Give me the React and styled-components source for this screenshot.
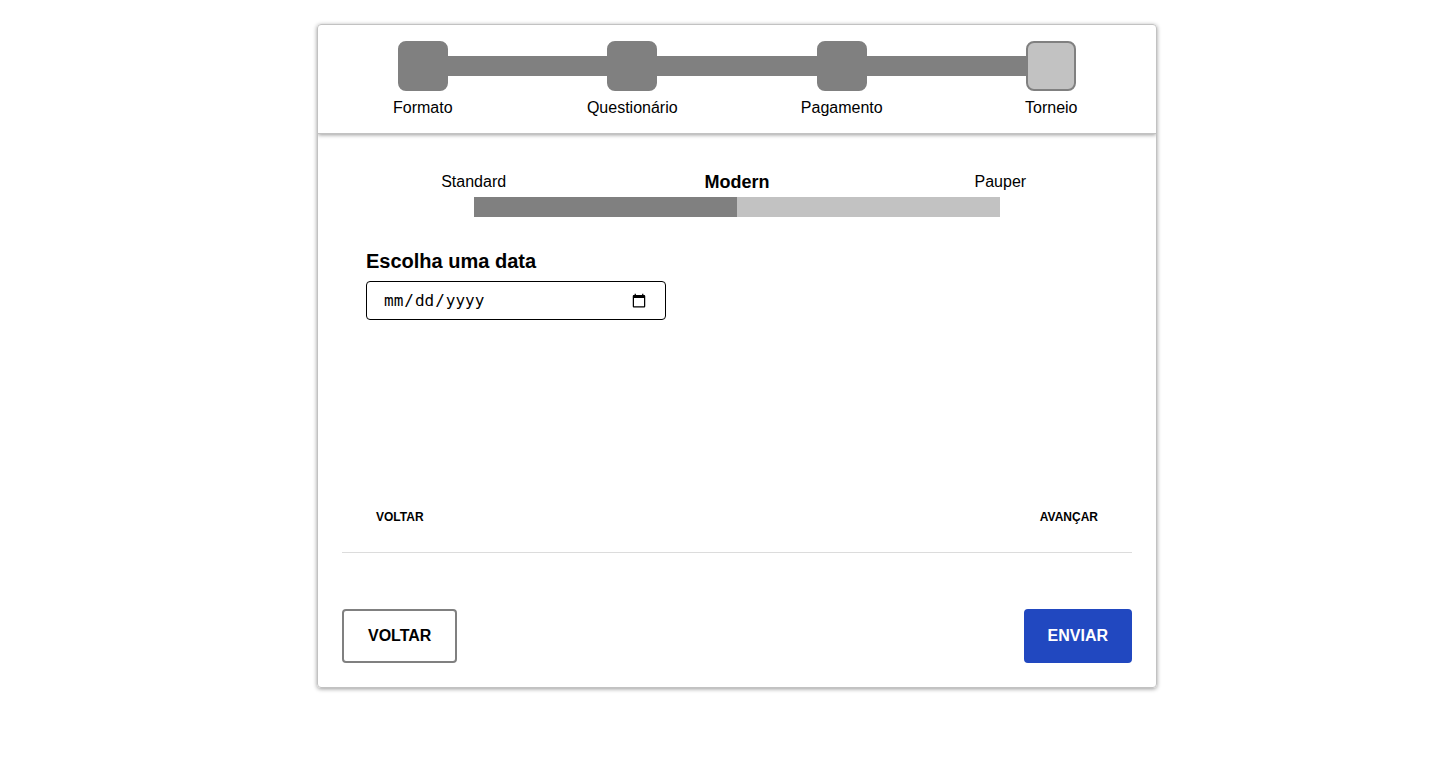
import React from "react";
import styled, { createGlobalStyle } from "styled-components";

const GlobalStyle = createGlobalStyle`
  * { box-sizing: border-box; margin: 0; }
  body {
    background: #fff;
    color: #000;
    font: 16px/18px "Liberation Sans", Arial, sans-serif;
  }
`;

const Page = styled.main`
  display: flex;
  justify-content: center;
  padding: 24px 0 24px 34px;
`;

const Card = styled.section`
  display: flex;
  flex-direction: column;
  width: 840px;
  height: 664px;
  border: 1px solid #c2c2c2;
  border-radius: 4px;
  box-shadow: 0 1px 4px rgba(0, 0, 0, 0.4);
`;

const Steps = styled.header`
  display: grid;
  grid-template-columns: repeat(4, 1fr);
  height: 109px;
  padding-top: 16px;
  border-bottom: 1px solid #c2c2c2;
  box-shadow: 0 1px 4px rgba(0, 0, 0, 0.4);
  clip-path: inset(0 0 -8px 0);
`;

const Step = styled.div`
  display: flex;
  flex-direction: column;
  gap: 8px;
  text-align: center;
`;

const Marker = styled.div`
  display: flex;
  align-items: center;
`;

const Line = styled.span`
  flex: 1;
  height: 20px;
  background: ${({ $hidden }) => ($hidden ? "transparent" : "#808080")};
`;

const Box = styled.span`
  width: 50px;
  height: 50px;
  border: 2px solid #808080;
  border-radius: 8px;
  background: ${({ $current }) => ($current ? "#c2c2c2" : "#808080")};
`;

const Content = styled.div`
  display: flex;
  flex: 1;
  flex-direction: column;
  padding: 0 24px 24px;
`;

const Formats = styled.div`
  display: grid;
  grid-template-columns: repeat(3, 1fr);
  align-items: center;
  height: 24px;
  margin-top: 36px;
  text-align: center;
`;

const Format = styled.span`
  font-size: ${({ $active }) => ($active ? 18 : 16)}px;
  font-weight: ${({ $active }) => ($active ? 700 : 400)};
`;

const Bar = styled.div`
  display: flex;
  height: 20px;
  margin-top: 3px;
  padding: 0 calc(100% / 6);
`;

const Segment = styled.span`
  flex: 1;
  background: ${({ $done }) => ($done ? "#808080" : "#c2c2c2")};
`;

const Field = styled.label`
  display: flex;
  flex-direction: column;
  align-items: flex-start;
  gap: 8px;
  margin-top: 33px;
  padding: 0 24px;
  font-size: 20px;
  font-weight: 700;
  line-height: 23px;
`;

const DateInput = styled.input`
  width: 300px;
  height: 39px;
  padding: 8px 16px;
  border: 1px solid #000;
  border-radius: 4px;
  background: #fff;
  color: #000;
  font-size: 16px;
`;

const FieldNav = styled.nav`
  display: flex;
  justify-content: space-between;
  margin-top: auto;
  padding: 0 24px 18px;
  border-bottom: 1px solid #dcdcdc;
`;

const TextButton = styled.button`
  height: 34px;
  padding: 0 10px;
  border: 0;
  background: transparent;
  color: #000;
  font: 700 12px "Liberation Sans", Arial, sans-serif;
  text-transform: uppercase;
`;

const Actions = styled.footer`
  display: flex;
  justify-content: space-between;
  margin-top: 56px;
`;

const Button = styled.button`
  height: 54px;
  padding: 0 ${({ $primary }) => ($primary ? 22 : 24)}px;
  border: 2px solid ${({ $primary }) => ($primary ? "#2148c0" : "#808080")};
  border-radius: 4px;
  background: ${({ $primary }) => ($primary ? "#2148c0" : "#fff")};
  color: ${({ $primary }) => ($primary ? "#fff" : "#000")};
  font: 700 16px "Liberation Sans", Arial, sans-serif;
  text-transform: uppercase;
`;

const steps = ["Formato", "Questionário", "Pagamento", "Torneio"];
const formats = ["Standard", "Modern", "Pauper"];

export default function App() {
  return (
    <Page>
      <GlobalStyle />
      <Card>
        <Steps>
          {steps.map((name, i) => (
            <Step key={name}>
              <Marker>
                <Line $hidden={i === 0} />
                <Box $current={i === steps.length - 1} />
                <Line $hidden={i === steps.length - 1} />
              </Marker>
              <span>{name}</span>
            </Step>
          ))}
        </Steps>
        <Content>
          <Formats>
            {formats.map((name) => (
              <Format key={name} $active={name === "Modern"}>{name}</Format>
            ))}
          </Formats>
          <Bar>
            <Segment $done />
            <Segment />
          </Bar>
          <Field>
            Escolha uma data
            <DateInput type="date" />
          </Field>
          <FieldNav>
            <TextButton>Voltar</TextButton>
            <TextButton>Avançar</TextButton>
          </FieldNav>
          <Actions>
            <Button>Voltar</Button>
            <Button $primary>Enviar</Button>
          </Actions>
        </Content>
      </Card>
    </Page>
  );
}
